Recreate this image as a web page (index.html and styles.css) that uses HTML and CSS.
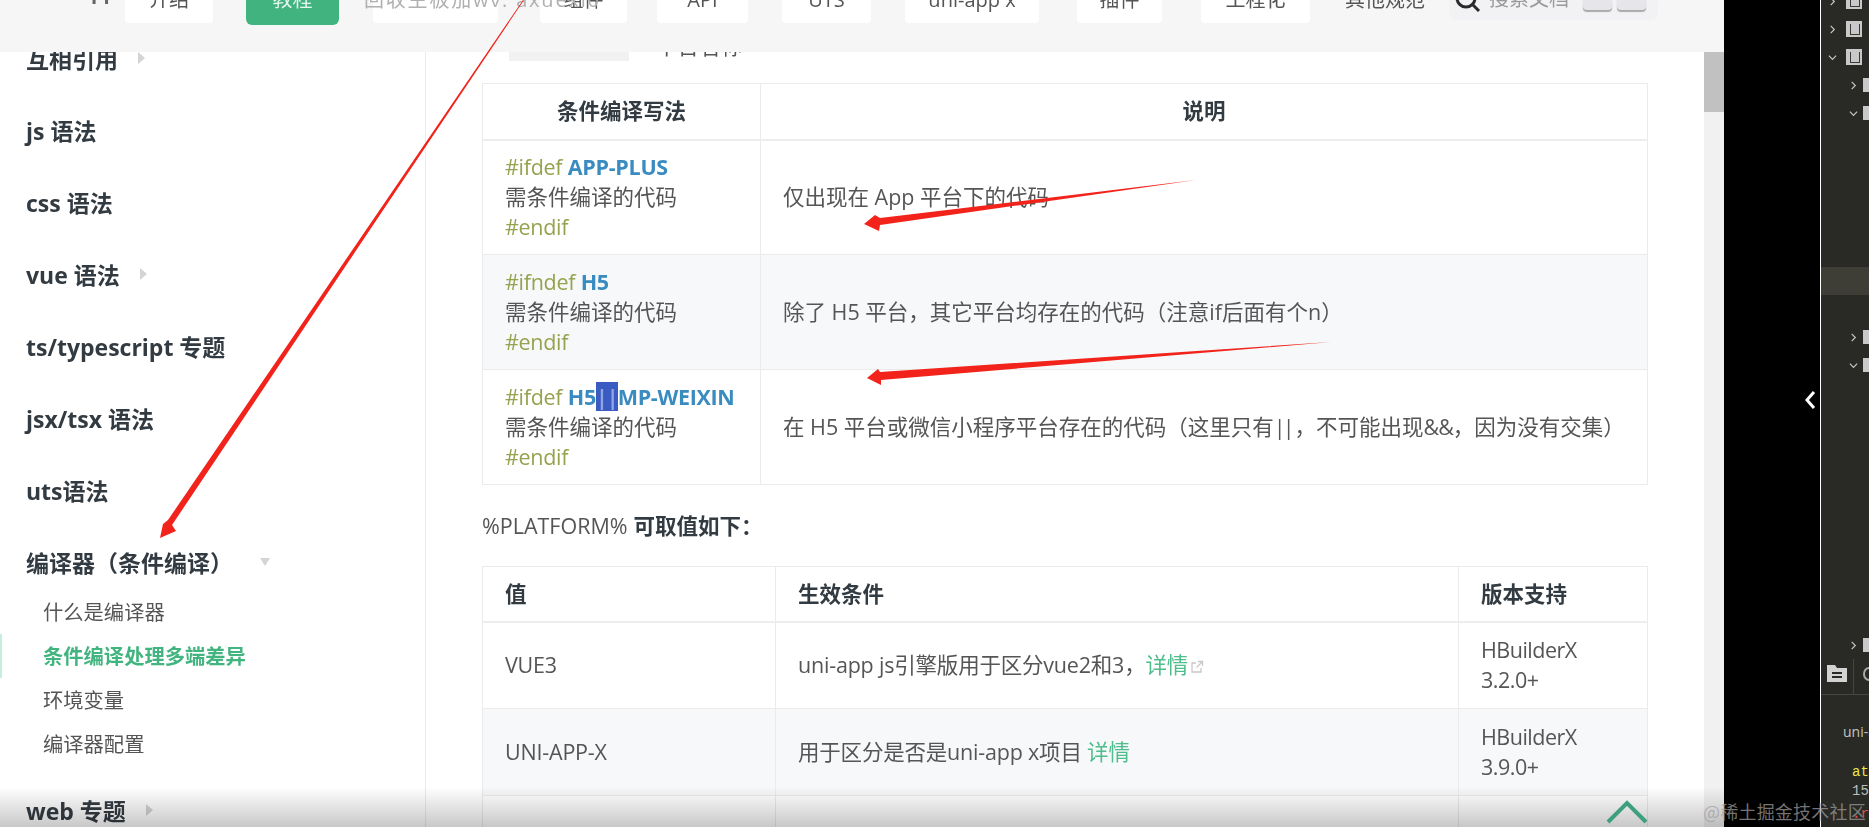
FILE: index.html
```html
<!DOCTYPE html>
<html lang="zh-CN">
<head>
<meta charset="utf-8">
<title>条件编译处理多端差异</title>
<link rel="stylesheet" href="styles.css">
</head>
<body>
<div class="stage">
  <div class="browser">
    <header class="topbar">
      <div class="nav">
        <span class="logo">uni-app</span>
        <a class="pill p1">介绍</a>
        <a class="pill p2 current">教程</a>
        <a class="pill p3"></a>
        <a class="pill p4">组件</a>
        <a class="pill p5">API</a>
        <a class="pill p6">UTS</a>
        <a class="pill p7">uni-app x</a>
        <a class="pill p8">插件</a>
        <a class="pill p9">工程化</a>
        <a class="pill p10">其他规范</a>
        <div class="search">
          <svg class="search-icon" viewBox="0 0 26 26" width="26" height="26"><circle cx="11" cy="11" r="9" fill="none" stroke="#2a2a2a" stroke-width="3"/><path d="M18 18l6 6" stroke="#2a2a2a" stroke-width="3" fill="none"/></svg>
          <span class="search-text">搜索文档</span>
          <span class="key"></span>
          <span class="key"></span>
        </div>
      </div>
      <span class="overlay-note">回收主板加wv: axuexi0</span>
    </header>
    <div class="body">
      <aside class="sidebar">
        <div class="side-list">
          <div class="side-item">互相引用<i class="caret"></i></div>
          <div class="side-item">js 语法</div>
          <div class="side-item">css 语法</div>
          <div class="side-item">vue 语法<i class="caret"></i></div>
          <div class="side-item">ts/typescript 专题</div>
          <div class="side-item">jsx/tsx 语法</div>
          <div class="side-item">uts语法</div>
          <div class="side-item">编译器（条件编译）<i class="caret-down"></i></div>
          <ul class="sub-list">
            <li class="sub-item">什么是编译器</li>
            <li class="sub-item active">条件编译处理多端差异</li>
            <li class="sub-item">环境变量</li>
            <li class="sub-item">编译器配置</li>
          </ul>
          <div class="side-item">web 专题<i class="caret"></i></div>
        </div>
      </aside>
      <main class="content">
        <div class="lead"><code class="lead-code">%PLATFORM%</code><span class="lead-text">平台名称</span></div>
        <table class="doc-table t1">
          <thead>
            <tr><th class="c1-1 center">条件编译写法</th><th class="center">说明</th></tr>
          </thead>
          <tbody>
            <tr>
              <td><span class="kw">#ifdef</span> <b class="plat">APP-PLUS</b><br>需条件编译的代码<br><span class="kw">#endif</span></td>
              <td>仅出现在 App 平台下的代码</td>
            </tr>
            <tr>
              <td><span class="kw">#ifndef</span> <b class="plat">H5</b><br>需条件编译的代码<br><span class="kw">#endif</span></td>
              <td>除了 H5 平台，其它平台均存在的代码（注意if后面有个n）</td>
            </tr>
            <tr>
              <td><span class="kw">#ifdef</span> <b class="plat">H5<span class="selected">||</span>MP-WEIXIN</b><br>需条件编译的代码<br><span class="kw">#endif</span></td>
              <td>在 H5 平台或微信小程序平台存在的代码（这里只有<span class="tight">||</span>，不可能出现<span class="tight-amp">&amp;&amp;</span>，因为没有交集）</td>
            </tr>
          </tbody>
        </table>
        <p class="platform-line">%PLATFORM% <b>可取值如下：</b></p>
        <table class="doc-table t2">
          <thead>
            <tr><th class="c2-1">值</th><th class="c2-2">生效条件</th><th>版本支持</th></tr>
          </thead>
          <tbody>
            <tr>
              <td>VUE3</td>
              <td>uni-app js引擎版用于区分vue2和3，<a class="link">详情</a><svg class="ext" viewBox="0 0 14 14" width="14" height="14"><path d="M11 8v4H2V3h4M8 1.500h4.500V6M12.500 1.500L6.500 7.500" fill="none" stroke="#c8c8c8" stroke-width="1.300"/></svg></td>
              <td>HBuilderX<br>3.2.0+</td>
            </tr>
            <tr>
              <td>UNI-APP-X</td>
              <td>用于区分是否是uni-app x项目 <a class="link">详情</a></td>
              <td>HBuilderX<br>3.9.0+</td>
            </tr>
            <tr>
              <td></td>
              <td></td>
              <td>HBuilderX</td>
            </tr>
          </tbody>
        </table>
      </main>
      <div class="scrollbar"><div class="thumb"></div></div>
    </div>
    <div class="bottom-fade"></div>
    <svg class="to-top" viewBox="0 0 44 24" width="44" height="24"><path d="M3 22L22 3l19 19" fill="none" stroke="#3d9f80" stroke-width="4"/></svg>
  </div>

  <div class="gutter">
    <svg viewBox="0 0 12 20" width="12" height="20"><path d="M10 2L3 10l7 8" fill="none" stroke="#fff" stroke-width="3"/></svg>
  </div>

  <div class="editor">
    <div class="tree">
      <div class="row"><svg class="chev" viewBox="0 0 10 10"><path d="M3 1l4 4-4 4" /></svg><span class="mod"></span></div>
      <div class="row"><svg class="chev" viewBox="0 0 10 10"><path d="M3 1l4 4-4 4" /></svg><span class="mod"></span></div>
      <div class="row"><svg class="chev" viewBox="0 0 10 10"><path d="M1 3l4 4 4-4" /></svg><span class="mod"></span></div>
      <div class="row lvl"><svg class="chev" viewBox="0 0 10 10"><path d="M3 1l4 4-4 4" /></svg><span class="fileicon"></span></div>
      <div class="row lvl"><svg class="chev" viewBox="0 0 10 10"><path d="M1 3l4 4 4-4" /></svg><span class="fileicon"></span></div>
      <div class="gap5"></div>
      <div class="row hl"></div>
      <div class="row"></div>
      <div class="row lvl"><svg class="chev" viewBox="0 0 10 10"><path d="M3 1l4 4-4 4" /></svg><span class="fileicon"></span></div>
      <div class="row lvl"><svg class="chev" viewBox="0 0 10 10"><path d="M1 3l4 4 4-4" /></svg><span class="fileicon"></span></div>
      <div class="gap9"></div>
      <div class="row lvl"><svg class="chev" viewBox="0 0 10 10"><path d="M3 1l4 4-4 4" /></svg><span class="fileicon"></span></div>
    </div>
    <div class="tabs">
      <div class="tab">
        <svg viewBox="0 0 20 17" width="20" height="17"><path d="M0 0h8l2 3h10v14H0z" fill="#d2d2d2"/><path d="M5 8h10M5 12h10" stroke="#292a25" stroke-width="2"/></svg>
      </div>
      <div class="tab2"><span class="drop"></span></div>
    </div>
    <div class="console">
      <div class="c-uni">uni-app</div>
      <div class="c-at">at App.vue</div>
      <div class="c-num">15:09</div>
      <div class="c-red">.run</div>
    </div>
  </div>

  <svg class="arrows" viewBox="0 0 1869 827" width="1869" height="827">
    <polygon points="523,0 524,0 172,525 176,531 160,538 163,524 168,520" fill="#f2231b"/>
    <polygon points="1196,180 880,218 875,215 864,224 879,231 880,225" fill="#f2231b"/>
    <polygon points="1331,342 880,372 878,369 867,378 881,385 881,380" fill="#f2231b"/>
  </svg>
  <div class="watermark">@稀土掘金技术社区</div>
</div>
</body>
</html>
```
FILE: styles.css
```css
* { box-sizing: border-box; }
html, body { margin: 0; padding: 0; height: 100%; overflow: hidden; background: #000; }
body { font-family: "Open Sans", "Noto Sans CJK SC", sans-serif; color: #555; text-spacing-trim: space-all; }

.stage { position: relative; display: flex; width: 1869px; height: 827px; overflow: hidden; }

/* browser capture */
.browser { position: relative; display: flex; flex-direction: column; width: 1724px; height: 827px; overflow: hidden; background: #fff; filter: blur(.45px); }

.topbar { position: relative; flex: 0 0 52px; background: #f6f6f6; overflow: hidden; }
.nav { display: flex; align-items: flex-start; padding-left: 40px; margin-top: -23px; font-size: 20px; line-height: 46px; color: #555; }
.logo { width: 85px; font-weight: 700; color: #666; line-height: 30px; }
.pill { display: block; height: 46px; text-align: center; background: #fff; border-radius: 4px; white-space: nowrap; }
.p1 { width: 88px; margin-right: 33px; }
.p2 { width: 93px; margin-right: 34px; height: 48px; background: #41b37f; color: #e6f5ee; border-radius: 6px; }
.p3 { width: 125px; margin-right: 42px; }
.p4 { width: 87px; margin-right: 30px; }
.p5 { width: 91px; margin-right: 34px; }
.p6 { width: 89px; margin-right: 34px; }
.p7 { width: 134px; margin-right: 38px; }
.p8 { width: 85px; margin-right: 39px; }
.p9 { width: 109px; margin-right: 35px; }
.p10 { width: 78px; margin-right: 26px; background: none; }
.search { display: flex; align-items: flex-start; width: 209px; height: 43px; padding: 8px 4px 0 6px; background: #f2f2f5; border-radius: 8px; line-height: 26px; color: #999; }
.search-icon { margin-top: 2px; flex: none; }
.search-text { width: 102px; padding-left: 8px; line-height: 26px; margin-top: 1px; white-space: nowrap; }
.key { width: 29px; height: 25px; margin-right: 5px; border-radius: 4px; background: #e6e6ea; box-shadow: 0 2px 1px #aaa; }
.overlay-note { position: absolute; left: 364px; top: -19px; font-size: 20px; line-height: 38px; letter-spacing: 1.800px; color: #b0b0b0; white-space: nowrap; }

.body { flex: 1; display: flex; min-height: 0; overflow: hidden; }

.sidebar { flex: 0 0 426px; border-right: 1px solid #ececec; overflow: hidden; }
.side-list { margin-top: -30px; }
.side-item { display: flex; align-items: center; height: 72px; padding-left: 26px; font-size: 23px; font-weight: 700; color: #333b42; white-space: nowrap; }
.caret { width: 0; height: 0; margin-left: 20px; border-style: solid; border-width: 6px 0 6px 7px; border-color: transparent transparent transparent #d4d4d4; }
.caret-down { width: 0; height: 0; margin-left: 27px; border-style: solid; border-width: 8px 5.500px 0; border-color: #d4d4d4 transparent transparent; }
.sub-list { list-style: none; margin: -8px 0 8px; padding: 0; }
.sub-item { height: 44px; padding-left: 43px; font-size: 20.3px; line-height: 44px; color: #555; }
.sub-item.active { font-weight: 700; color: #42b47f; border-left: 2px solid #c7eeda; padding-left: 41px; }

.content { flex: 1; min-width: 0; padding: 0 56px; overflow: hidden; font-size: 21.5px; line-height: 30px; color: #555; }
.lead { display: flex; height: 31px; align-items: flex-start; }
.lead-code { width: 120px; height: 30px; margin: -21px 0 0 27px; background: #f1f1f1; color: #f1f1f1; font-size: 14px; }
.lead-text { margin: -21px 0 0 27px; }

.doc-table { width: 1166px; border-collapse: collapse; table-layout: fixed; border: 1px solid #e9e9e9; }
.doc-table th, .doc-table td { border: 1px solid #ebebeb; padding: 0 22px; text-align: left; vertical-align: middle; }
.doc-table th { height: 56px; font-weight: 700; color: #333b42; border-bottom: 2px solid #ededed; }
.doc-table th.center { text-align: center; }
.doc-table tbody tr:nth-child(even) { background: #f6f8fa; }
.doc-table.t1 td { height: 115px; padding-right: 4px; white-space: nowrap; }
.c1-1 { width: 278px; }
.doc-table.t2 th { height: 55px; }
.doc-table.t2 td { height: 87px; letter-spacing: -.2px; }
.doc-table.t2 td:last-child { letter-spacing: -.5px; }
.c2-1 { width: 293px; }
.c2-2 { width: 683px; }

.kw { color: #97a24f; letter-spacing: -.3px; }
.plat { color: #3a8cc0; font-weight: 700; letter-spacing: -.3px; }
.selected { background: #3a5cc2; color: #8fa5e6; letter-spacing: -1px; }
.tight { letter-spacing: -3px; padding-right: 3px; }
.tight-amp { letter-spacing: -1px; }
.link { color: #4fbd8c; }
.ext { vertical-align: -1px; margin-left: 2px; }

.platform-line { display: flex; gap: 6px; align-items: center; height: 81px; margin: 0; }
.platform-line b { color: #333b42; }

.scrollbar { flex: 0 0 20px; background: #f1f1f1; }
.thumb { height: 60px; background: #c1c1c1; }

.bottom-fade { position: absolute; left: 0; right: 0; bottom: 0; height: 40px; background: linear-gradient(to bottom, #fff, #c8c8c8); mix-blend-mode: multiply; }
.to-top { position: absolute; left: 1605px; top: 800px; }

/* black gutter */
.gutter { display: flex; flex: 0 0 96px; justify-content: flex-end; align-items: center; padding: 0 4px 27px 0; background: #000; }

/* editor */
.editor { flex: 1; min-width: 0; border-left: 1px solid #fff; background: #292a25; overflow: hidden; display: flex; flex-direction: column; }
.tree { flex: 0 0 659px; margin-top: -13px; height: 672px; }
.row { display: flex; align-items: center; height: 28px; padding-left: 7px; }
.row.lvl { padding-left: 28px; }
.row.hl { background: #3e3e36; }
.gap5 { height: 140px; }
.gap9 { height: 252px; }
.chev { width: 9px; height: 9px; flex: none; fill: none; stroke: #c8c8c8; stroke-width: 1.300; }
.mod { position: relative; flex: none; width: 16px; height: 16px; margin-left: 9px; background: #c9c9c9; }
.mod::after { content: ""; position: absolute; left: 4px; top: 3px; width: 8px; height: 10px; border: 1.500px solid #3a3a36; border-top: 0; }
.fileicon { flex: none; width: 6px; height: 14px; margin-left: 5px; background: #c9c9c9; }
.tabs { flex: 0 0 36px; display: flex; border-bottom: 1px solid #45463f; }
.tab { display: flex; align-items: center; flex: 0 0 33px; padding: 0 0 7px 6px; border-right: 1px solid #45463f; }
.tab2 { flex: 1; padding: 8px 0 0 9px; }
.drop { display: block; width: 12px; height: 14px; border: 2px solid #aaa; border-radius: 50%; }
.console { flex: 1; font-family: "Liberation Mono", "DejaVu Sans Mono", monospace; font-size: 14px; line-height: 19px; white-space: nowrap; padding-top: 27px; }
.c-uni { padding-left: 22px; font-family: "Open Sans", sans-serif; color: #c4c4c4; }
.c-at { padding: 22px 0 0 31px; color: #e8e84a; }
.c-num { padding-left: 31px; color: #bdbdbd; }
.c-red { padding: 4px 0 0 31px; color: #e25050; }

.arrows { position: absolute; left: 0; top: 0; pointer-events: none; }
.watermark { position: absolute; left: 1703px; top: 799px; font-family: "Noto Sans CJK SC", sans-serif; font-size: 18px; line-height: 24px; letter-spacing: .2px; color: rgba(160,160,160,.72); white-space: nowrap; }
```
